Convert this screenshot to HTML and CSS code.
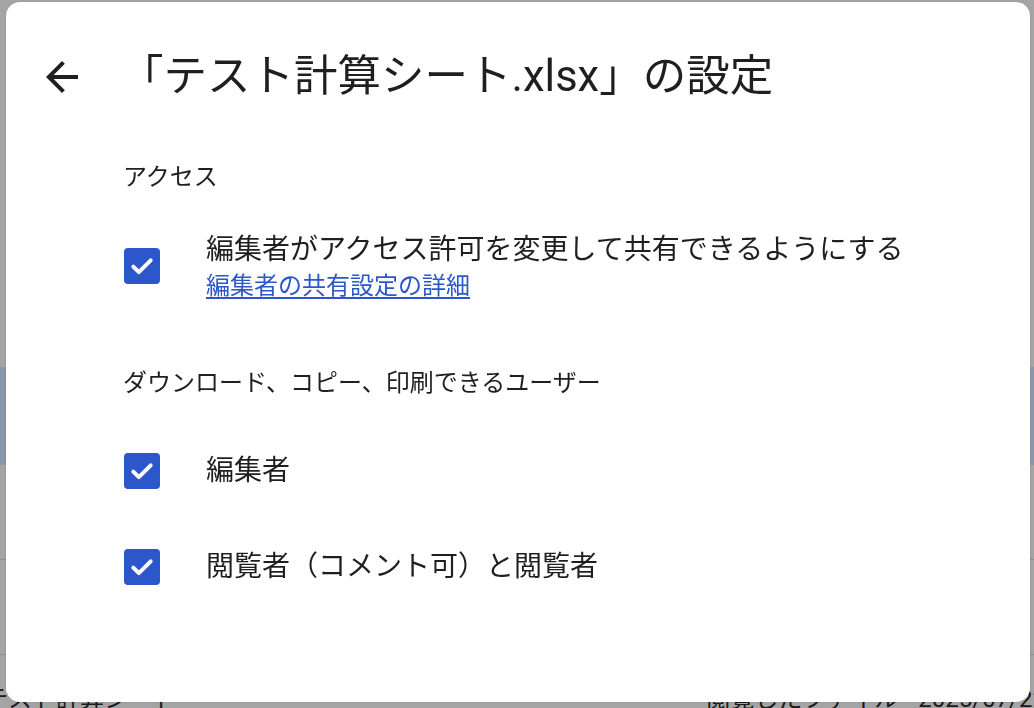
FILE: index.html
```html
<!DOCTYPE html>
<html lang="ja">
<head>
    <meta charset="UTF-8">
    <meta name="viewport" content="width=device-width, initial-scale=1.0">
    <title>「テスト計算シート.xlsx」の設定</title>
    <link rel="stylesheet" href="styles.css">
</head>
<body>

    <!-- Página de fondo (atenuada por el diálogo) -->
    <div class="page">
        <div class="page-top"></div>
        <div class="file-row selected"></div>
        <div class="file-row"></div>
        <div class="file-row"></div>
        <div class="file-row last"><span class="file-name">テスト計算シート</span><span class="file-meta">閲覧したファイル • 2025/07/22</span></div>
    </div>

    <!-- Diálogo de configuración -->
    <div class="dialog">
        <div class="dialog-header">
            <button class="back-btn" aria-label="戻る">
                <svg viewBox="0 0 24 24" width="48" height="48">
                    <path d="M20 11H7.83l5.59-5.59L12 4l-8 8 8 8 1.41-1.41L7.83 13H20v-2z" fill="#1f1f1f"/>
                </svg>
            </button>
            <h1 class="dialog-title">「テスト計算シート.xlsx」の設定</h1>
        </div>

        <div class="dialog-body">
            <h2 class="section-title first">アクセス</h2>
            <label class="option option-access">
                <span class="checkbox">
                    <svg viewBox="0 0 24 24" width="36" height="36">
                        <path d="M6.2 12.4l3.7 3.7 7.9-7.9" fill="none" stroke="#fff" stroke-width="2.6" stroke-linecap="round" stroke-linejoin="round"/>
                    </svg>
                </span>
                <span class="option-text">
                    <span class="option-label">編集者がアクセス許可を変更して共有できるようにする</span>
                    <a class="option-link" href="#">編集者の共有設定の詳細</a>
                </span>
            </label>

            <h2 class="section-title second">ダウンロード、コピー、印刷できるユーザー</h2>
            <label class="option option-editors">
                <span class="checkbox">
                    <svg viewBox="0 0 24 24" width="36" height="36">
                        <path d="M6.2 12.4l3.7 3.7 7.9-7.9" fill="none" stroke="#fff" stroke-width="2.6" stroke-linecap="round" stroke-linejoin="round"/>
                    </svg>
                </span>
                <span class="option-label">編集者</span>
            </label>
            <label class="option option-viewers">
                <span class="checkbox">
                    <svg viewBox="0 0 24 24" width="36" height="36">
                        <path d="M6.2 12.4l3.7 3.7 7.9-7.9" fill="none" stroke="#fff" stroke-width="2.6" stroke-linecap="round" stroke-linejoin="round"/>
                    </svg>
                </span>
                <span class="option-label">閲覧者（コメント可）と閲覧者</span>
            </label>
        </div>
    </div>

</body>
</html>
```

FILE: styles.css
```css
body {
    margin: 0;
    font-family: Roboto, "Noto Sans CJK JP", sans-serif;
    background-color: #a4a4a4;
    color: #1f1f1f;
    overflow: hidden;
}

/* Fondo atenuado */
.page {
    height: 708px;
    overflow: hidden;
    color: #1a1a1a;
}

.page-top {
    height: 367px;
}

.file-row {
    box-sizing: border-box;
    display: flex;
    justify-content: space-between;
    height: 95px;
    border-bottom: 1px solid #8e8e8e;
    font-size: 24px;
}

.file-row.selected {
    background-color: #8799a9;
    height: 98px;
    border-bottom: none;
}

.file-row.last {
    height: 53px;
    border-bottom: none;
    padding: 28px 0 0;
    line-height: 32px;
}

.file-name {
    margin-left: -16px;
}

.file-meta {
    margin-right: -12px;
}

/* Diálogo */
.dialog {
    position: fixed;
    left: 6px;
    top: 2px;
    width: 1024px;
    height: 700px;
    background-color: #fff;
    border-radius: 14px;
    box-shadow: 0 0 2px rgba(0, 0, 0, 0.15);
}

.dialog-header {
    display: flex;
    align-items: center;
    height: 150px;
    padding-left: 32px;
}

.back-btn {
    display: flex;
    padding: 0;
    border: none;
    background: none;
    cursor: pointer;
}

.dialog-title {
    margin: 0 0 0 34px;
    font-size: 43.5px;
    font-weight: 400;
    line-height: 50px;
    color: #1f1f1f;
}

.dialog-body {
    padding-left: 117px;
}

.section-title {
    margin: 0;
    font-size: 24px;
    font-weight: 400;
    line-height: 32px;
    color: #1f1f1f;
}

.section-title.first {
    margin-top: 9px;
}

.section-title.second {
    margin-top: 64px;
}

.option {
    display: flex;
    align-items: center;
    cursor: pointer;
}

.option-access {
    align-items: flex-start;
    margin-top: 38px;
}

.option-access .checkbox {
    margin-top: 17px;
}

.option-editors {
    margin-top: 52px;
    height: 40px;
}

.option-viewers {
    margin-top: 56px;
    height: 40px;
}

.checkbox {
    display: flex;
    flex-shrink: 0;
    width: 36px;
    height: 36px;
    margin-left: 1px;
    margin-right: 46px;
    background-color: #2b57ca;
    border-radius: 4px;
}

.option-text {
    display: flex;
    flex-direction: column;
}

.option-label {
    font-size: 28px;
    line-height: 38px;
}

.option-link {
    font-size: 24px;
    line-height: 34px;
    color: #2b57ca;
    text-decoration: underline;
    text-underline-offset: 3px;
}
```
